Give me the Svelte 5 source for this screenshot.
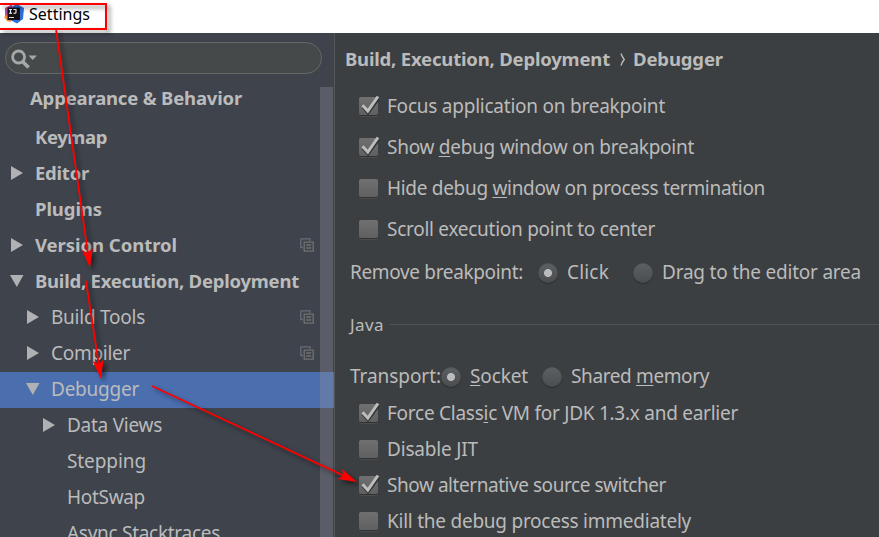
<script>
  const tree = [
    { parts: 'Keymap', pad: 34, w: 72, bold: true },
    { parts: 'Editor', pad: 34, w: 54, bold: true, arrow: 'right' },
    { parts: 'Plugins', pad: 34, w: 67, bold: true },
    { parts: 'Version Control', pad: 34, w: 142, bold: true, arrow: 'right', copy: true },
    { parts: 'Build, Execution, Deployment', pad: 34, w: 264, bold: true, arrow: 'down' },
    { parts: 'Build Tools', pad: 50, w: 94, arrow: 'right', copy: true },
    { parts: 'Compiler', pad: 50, w: 79, arrow: 'right', copy: true },
    { parts: 'Debugger', pad: 50, w: 88, arrow: 'down', selected: true },
    { parts: 'Data Views', pad: 66, w: 95, arrow: 'right' },
    { parts: 'Stepping', pad: 66, w: 79 },
    { parts: 'HotSwap', pad: 66, w: 78 },
    { parts: 'Async Stacktraces', pad: 66, w: 153 }
  ];
  const general = [
    { parts: ['Focus application on breakpoint'], w: 278, on: true },
    { parts: ['Show ', 'd', 'ebug window on breakpoint'], w: 307, on: true },
    { parts: ['Hide debug ', 'w', 'indow on process termination'], w: 378 },
    { parts: ['Scroll execution point to center'], w: 268 }
  ];
  const java = [
    { parts: ['Force Class', 'i', 'c VM for JDK 1.3.x and earlier'], w: 351, on: true },
    { parts: ['Disable JIT'], w: 91 },
    { parts: ['Show alternative source switcher'], w: 279, on: true },
    { parts: ['Kill the debug process immediately'], w: 304 }
  ];
  const arrows = [
    [56, 29, 90, 268],
    [86, 281, 101, 379],
    [152, 386, 357, 482]
  ].map(([x1, y1, x2, y2]) => ({
    x1, y1, x2, y2,
    len: Math.hypot(x2 - x1, y2 - y1),
    deg: (Math.atan2(y2 - y1, x2 - x1) * 180) / Math.PI
  }));

  function fit(node, width) {
    const natural = node.getBoundingClientRect().width;
    node.style.letterSpacing = (width - natural) / node.textContent.length + 'px';
  }
</script>

{#snippet label(parts, w)}
  <span class="label" use:fit={w}>{#each [parts].flat() as p, i}{#if i === 1}<u>{p}</u>{:else}{p}{/if}{/each}</span>
{/snippet}

{#snippet check(item)}
  <div class="check">
    <span class="box">
      {#if item.on}
        <svg width="22" height="22" viewBox="0 0 22 22">
          <path d="M4 12 L9 17.8 L19.5 3.5" fill="none" stroke="#2f3031" stroke-width="3" />
          <path d="M3.5 10.2 L8.8 16 L19 1.5" fill="none" stroke="#bcbdbd" stroke-width="3" />
        </svg>
      {/if}
    </span>
    {@render label(item.parts, item.w)}
  </div>
{/snippet}

<div class="window">
  <header>
    <svg class="logo" width="20" height="20" viewBox="0 0 20 20">
      <path d="M1 4 L7 1 L10 6 L5 17 L1 14Z" fill="#e8417a" />
      <path d="M0 13 L6 9 L7 18 L3 17Z" fill="#f58b3c" />
      <path d="M9 2 L13 0 L20 4 L19 15 L13 19.5 L6 16Z" fill="#2f6fd8" />
      <path d="M1 7 L8 0 L9 5 L4 11Z" fill="#8e4ec6" />
      <rect x="3.5" y="3.5" width="12.5" height="12.5" fill="#141014" />
      <path d="M5 5.5H8M6.5 5.5V9.3M5 9.3H8M9.5 5.5H12V8.2Q12 9.3 10.8 9.3H9.5" fill="none" stroke="#fff" stroke-width="1.1" />
      <path d="M5 13.5H10" stroke="#ddd" />
    </svg>
    {@render label('Settings', 61)}
  </header>
  <div class="body">
    <aside>
      <div class="search">
        <svg width="30" height="22" viewBox="0 0 30 22">
          <circle cx="7.6" cy="8" r="6" fill="none" stroke="#a5a7a8" stroke-width="2.8" />
          <path d="M11.6 12.5 L17.6 18.5" stroke="#a5a7a8" stroke-width="3.6" />
          <path d="M17.5 6.5 H26 L21.7 11Z" fill="#a5a7a8" />
        </svg>
      </div>
      <div class="list">
        <div class="rows">
          <div class="row first bold">{@render label('Appearance & Behavior', 212)}</div>
          {#each tree as t}
            <div class="row" class:bold={t.bold} class:selected={t.selected}>
              <span class="gutter" style="width: {t.pad}px">
                {#if t.arrow}
                  <svg width="14" height="14" viewBox="0 0 14 14">
                    <path d={t.arrow === 'right' ? 'M1 0 L13 7 L1 14Z' : 'M0 1 H13.5 L6.8 13Z'} fill="#afb1b3" />
                  </svg>
                {/if}
              </span>
              {@render label(t.parts, t.w)}
              {#if t.copy}
                <svg class="copy" width="14" height="14" viewBox="0 0 14 14">
                  <path d="M3 9.5 H.8 V.8 H10 V3" fill="none" stroke="#666d75" stroke-width="1.3" />
                  <path d="M4.2 4.2 H13.2 V13.2 H4.2Z M6.2 7 H11.2 M6.2 10 H11.2" fill="none" stroke="#70726f" stroke-width="1.3" />
                </svg>
              {/if}
            </div>
          {/each}
        </div>
        <div class="scroll"></div>
      </div>
    </aside>
    <main>
      <h1>
        {@render label('Build, Execution, Deployment', 265)}
        <svg width="6" height="13" viewBox="0 0 6 13"><path d="M1 .5 Q2.2 4 4.2 6.5 Q2.2 9 1 12.5" fill="none" stroke="#bbb" stroke-width="1.4" /></svg>
        {@render label('Debugger', 90)}
      </h1>
      <div class="general">
        {#each general as item}{@render check(item)}{/each}
      </div>
      <div class="radios remove">
        {@render label('Remove breakpoint:', 173)}
        <span class="radio on"></span>
        {@render label('Click', 42)}
        <span class="radio"></span>
        {@render label('Drag to the editor area', 199)}
      </div>
      <div class="section">{@render label('Java', 34)}<hr /></div>
      <div class="radios transport">
        {@render label('Transport:', 91)}
        <span class="radio on"></span>
        {@render label(['', 'S', 'ocket'], 58)}
        <span class="radio"></span>
        {@render label(['Shared ', 'm', 'emory'], 138)}
      </div>
      <div class="java">
        {#each java as item}{@render check(item)}{/each}
      </div>
    </main>
  </div>
  <svg class="notes" width="879" height="537" viewBox="0 0 879 537">
    <rect x="-1" y="4" width="107" height="25" fill="none" stroke="#f00" stroke-width="2" />
    {#each arrows as a}
      <g transform="translate({a.x1} {a.y1}) rotate({a.deg})">
        <path d="M0 0 H{a.len - 12}" stroke="#f00" stroke-width="1.8" />
        <path d="M{a.len} 0 L{a.len - 19} -5.5 L{a.len - 15} 0 L{a.len - 19} 5.5Z" fill="#f00" />
      </g>
    {/each}
  </svg>
</div>

<style>
  :global(body) { margin: 0; overflow: hidden; }
  .window {
    position: relative;
    width: 879px;
    height: 537px;
    overflow: hidden;
    display: flex;
    flex-direction: column;
    font: 19px/24px 'Noto Sans', 'Open Sans', sans-serif;
    color: #bbb;
  }
  .label { white-space: pre; flex: none; }
  u { text-decoration-thickness: 1px; text-underline-offset: 2px; }
  header {
    height: 33px;
    flex: none;
    box-sizing: border-box;
    padding: 0 0 5px 4px;
    display: flex;
    align-items: center;
    gap: 5px;
    background: #fff;
    color: #000;
    font-size: 16px;
  }
  .body { flex: 1; min-height: 0; display: flex; }
  aside {
    width: 334px;
    flex: none;
    display: flex;
    flex-direction: column;
    background: #3e434c;
    border-right: 1px solid #555759;
  }
  .search {
    width: 317px;
    height: 32px;
    flex: none;
    box-sizing: border-box;
    margin: 9px 0 0 5px;
    padding: 6px 0 0 5px;
    border: 1px solid #646765;
    border-radius: 16px;
    background: #45494a;
  }
  .search svg { display: block; }
  .list { flex: 1; min-height: 0; display: flex; position: relative; margin-top: 6px; }
  .rows { width: 334px; flex: none; }
  .row { height: 36px; display: flex; align-items: center; box-sizing: border-box; padding-bottom: 2px; }
  .first { height: 40px; padding: 0 0 4px 30px; }
  .gutter { flex: none; display: flex; box-sizing: border-box; justify-content: flex-end; padding-right: 10px; }
  .gutter + .label { margin-left: 1px; }
  .row svg { display: block; }
  .selected { background: #4b6eaf; }
  .copy { margin: 0 20px 0 auto; }
  .bold, h1 { font-weight: 700; font-size: 18.5px; }
  .scroll { position: absolute; right: 1px; top: 7px; bottom: 0; width: 13px; background: rgba(148, 144, 155, .34); }
  main { flex: 1; min-width: 0; background: #3c3f41; }
  h1 { margin: 14px 0 0 10px; height: 24px; line-height: 24px; display: flex; align-items: center; }
  h1 svg { margin: 0 7px 0 10px; flex: none; }
  .check { display: flex; align-items: center; gap: 9px; padding-left: 24px; }
  .general { margin-top: 14px; }
  .general .check { height: 41px; }
  .java { margin-top: 6px; }
  .java .check { height: 36px; }
  .box {
    width: 19px;
    height: 18px;
    flex: none;
    border-radius: 2px;
    background: linear-gradient(#707070, #606060);
    box-shadow: 0 1px 0 #2f3132, 0 2px 0 #4a4d4f;
  }
  .box svg { display: block; margin-top: -2px; overflow: visible; }
  .radios { display: flex; align-items: center; padding-left: 15px; }
  .radio {
    width: 20px;
    height: 20px;
    flex: none;
    margin-top: 2px;
    border-radius: 50%;
    background: linear-gradient(#5c6062, #4a4e50);
    box-shadow: 0 1px 1px #2b2d2e, inset 0 0 1px #333;
  }
  .on { background: radial-gradient(circle, #bbb 0 3.6px, transparent 4.4px), linear-gradient(#5c6062, #4a4e50); }
  .remove { height: 41px; margin-top: 2px; }
  .remove .radio.on { margin-left: 15px; margin-right: 9px; }
  .remove .radio:not(.on) { margin-left: 24px; margin-right: 9px; }
  .section { height: 24px; margin-top: 21px; padding-left: 15px; display: flex; align-items: center; gap: 6px; }
  .section { font-size: 17px; }
  hr { flex: 1; height: 1px; border: 0; margin: 0 0 2px; background: #515456; }
  .transport { height: 26px; margin-top: 26px; }
  .transport .radio.on { margin-right: 9px; }
  .transport .radio:not(.on) { margin-left: 14px; margin-right: 9px; }
  .notes { position: absolute; inset: 0; pointer-events: none; filter: drop-shadow(3px 3px 2px rgba(0, 0, 0, .5)); }
</style>
